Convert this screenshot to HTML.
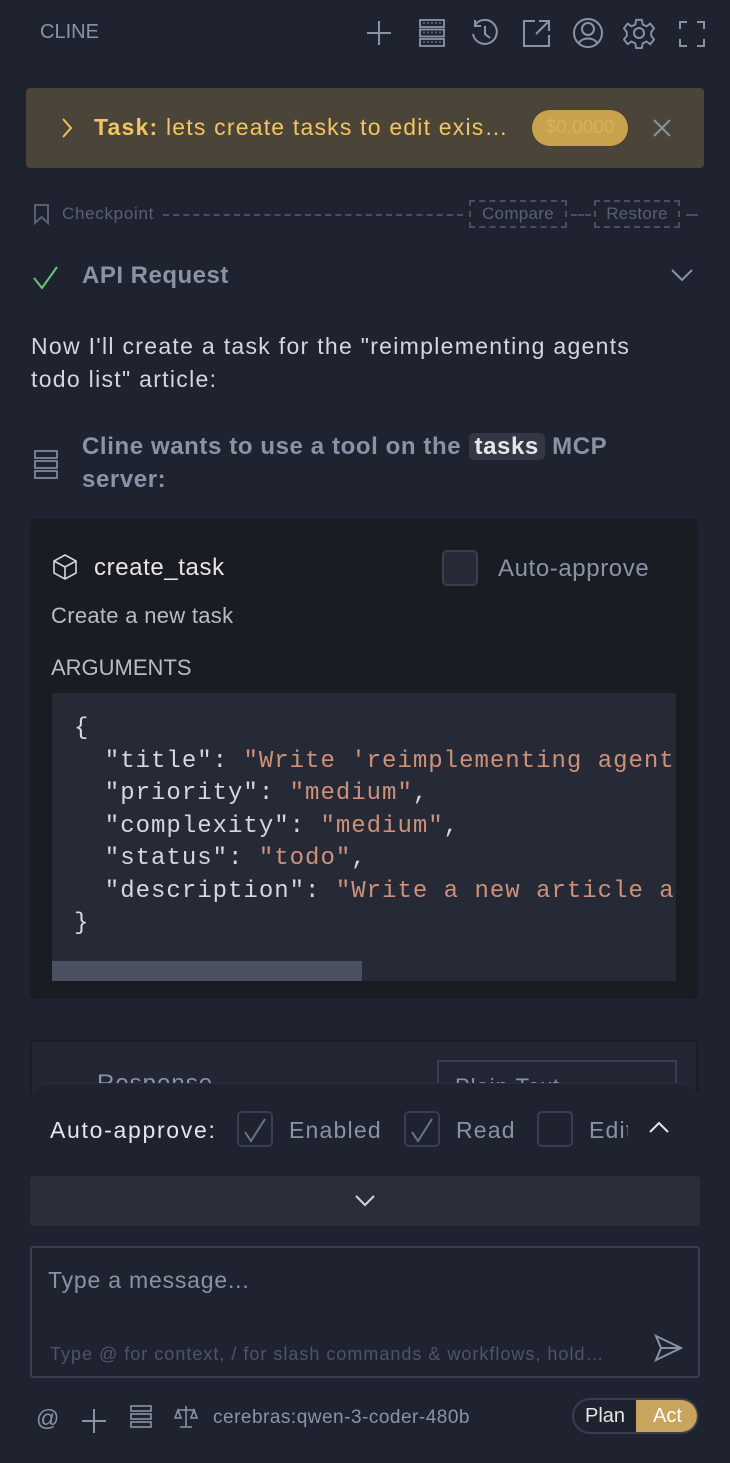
<!DOCTYPE html>
<html><head><meta charset="utf-8"><style>
*{margin:0;padding:0;box-sizing:border-box}
body{width:730px;height:1456px;background:#1f2330;font-family:"Liberation Sans",sans-serif;color:#c8ccd4;position:relative;overflow:hidden;letter-spacing:1px}
.a{position:absolute;white-space:nowrap}
svg{position:absolute;fill:none;stroke:#8a93a6;stroke-width:2}
.mono{font-family:"Liberation Mono",monospace}
</style></head><body>
<div class="a" style="left:40px;top:21px;font-size:20px;color:#8a93a6;letter-spacing:0">CLINE</div>
<svg style="left:364px;top:18px" width="30" height="30"><path d="M15 3v24M3 15h24"/></svg>
<svg style="left:418px;top:18px;stroke-width:1.8" width="28" height="30"><rect x="2" y="2" width="24" height="7"/><rect x="2" y="11.5" width="24" height="7"/><rect x="2" y="21" width="24" height="7"/><path d="M6 4v2M10 4v2M14 4v2M18 4v2M22 4v2M6 13.5v2M10 13.5v2M14 13.5v2M18 13.5v2M22 13.5v2M6 23v2M10 23v2M14 23v2M18 23v2M22 23v2" stroke-width="1"/></svg>
<svg style="left:469px;top:17px" width="32" height="32"><path d="M6 8a12 12 0 1 1-2 9M6 3v6h6M16 9v8l5 4"/></svg>
<svg style="left:521px;top:18px" width="30" height="30"><path d="M14 3H3v25h25V17M18 3h10v10M28 3L15 16"/></svg>
<svg style="left:572px;top:17px" width="32" height="32"><circle cx="16" cy="16" r="14"/><circle cx="16" cy="12" r="6"/><path d="M7 26c3-6 15-6 18 0"/></svg>
<svg style="left:623px;top:17px" width="32" height="32"><circle cx="16" cy="16" r="5"/><path d="M13 2h6l1 5 4 2 4-3 4 5-3 4v4l3 4-4 5-4-3-4 2-1 5h-6l-1-5-4-2-4 3-4-5 3-4v-4l-3-4 4-5 4 3 4-2z" transform="scale(.94) translate(1 1)"/></svg>
<svg style="left:678px;top:20px" width="28" height="28"><path d="M2 9V2h7M19 2h7v7M26 19v7h-7M9 26H2v-7"/></svg>

<div class="a" style="left:26px;top:88px;width:678px;height:80px;background:#4b4539;border-radius:4px"></div>
<svg style="left:60px;top:116px;stroke:#f0c060" width="14" height="24"><path d="M3 3l8 9-8 9"/></svg>
<div class="a" style="left:94px;top:114px;font-size:23px;color:#f3c462;letter-spacing:1.2px"><b>Task:</b> lets create tasks to edit exis…</div>
<div class="a" style="left:532px;top:110px;width:96px;height:36px;background:#c9a24e;border-radius:18px;color:#d8b254;font-size:19px;line-height:36px;text-align:center;letter-spacing:0">$0.0000</div>
<svg style="left:652px;top:118px" width="20" height="20"><path d="M2 2l16 16M18 2L2 18"/></svg>

<svg style="left:33px;top:203px;stroke:#5a6072" width="18" height="22"><path d="M2 2h13v18l-6.5-6L2 20z"/></svg>
<div class="a" style="left:62px;top:204px;font-size:17px;color:#5a6072;letter-spacing:0.7px">Checkpoint</div>
<div class="a" style="left:163px;top:214px;width:300px;border-top:2px dashed #4a4f5e"></div>
<div class="a" style="left:469px;top:200px;width:98px;height:28px;border:2px dashed #4a4f5e;font-size:17px;color:#5a6072;text-align:center;line-height:24px;letter-spacing:0.3px">Compare</div>
<div class="a" style="left:571px;top:214px;width:20px;border-top:2px dashed #4a4f5e"></div>
<div class="a" style="left:594px;top:200px;width:86px;height:28px;border:2px dashed #4a4f5e;font-size:17px;color:#5a6072;text-align:center;line-height:24px;letter-spacing:0.3px">Restore</div>
<div class="a" style="left:686px;top:214px;width:12px;border-top:2px dashed #4a4f5e"></div>

<svg style="left:32px;top:264px;stroke:#6cc47a" width="28" height="26"><path d="M2 14l8 10L25 3"/></svg>
<div class="a" style="left:82px;top:262px;font-size:24px;font-weight:bold;color:#8a93a6;letter-spacing:0.5px">API Request</div>
<svg style="left:670px;top:268px" width="24" height="14"><path d="M2 2l10 10 10-10"/></svg>

<div class="a" style="left:31px;top:330px;font-size:23px;color:#d4d7dd;line-height:33px;letter-spacing:1.3px">Now I'll create a task for the "reimplementing agents<br>todo list" article:</div>

<svg style="left:34px;top:450px;stroke-width:1.6" width="24" height="30"><rect x="1" y="1" width="22" height="7"/><rect x="1" y="11" width="22" height="7"/><rect x="1" y="21" width="22" height="7"/></svg>
<div class="a" style="left:82px;top:430px;font-size:24px;font-weight:bold;color:#8a93a6;line-height:33px;letter-spacing:0.6px">Cline wants to use a tool on the <span style="background:#343846;color:#e6e6e6;border-radius:5px;padding:0 6px">tasks</span> MCP<br>server:</div>

<div class="a" style="left:30px;top:519px;width:668px;height:480px;background:#191c23;border-radius:4px"></div>
<svg style="left:52px;top:553px;stroke:#d4d7dd;stroke-width:1.6" width="26" height="28"><path d="M13 2l11 6v12l-11 6-11-6V8zM2 8l11 6 11-6M13 14v12"/></svg>
<div class="a" style="left:94px;top:554px;font-size:24px;color:#e6e6e6;letter-spacing:0.6px">create_task</div>
<div class="a" style="left:442px;top:550px;width:36px;height:36px;border:2px solid #3a3f4e;border-radius:5px;background:#252a36"></div>
<div class="a" style="left:498px;top:555px;font-size:24px;color:#8a93a6;letter-spacing:0.6px">Auto-approve</div>
<div class="a" style="left:51px;top:603px;font-size:22px;color:#b8bcc4;letter-spacing:0.3px">Create a new task</div>
<div class="a" style="left:51px;top:655px;font-size:22px;color:#b8bcc4;letter-spacing:0">ARGUMENTS</div>
<div class="a" style="left:52px;top:693px;width:624px;height:288px;background:#262a36;overflow:hidden">
<pre class="mono a" style="left:22px;top:20px;font-size:24px;letter-spacing:1px;line-height:32.5px;color:#d4d7dd;white-space:pre">{
  "title": <span style="color:#ce9178">"Write 'reimplementing agents todo list'"</span>,
  "priority": <span style="color:#ce9178">"medium"</span>,
  "complexity": <span style="color:#ce9178">"medium"</span>,
  "status": <span style="color:#ce9178">"todo"</span>,
  "description": <span style="color:#ce9178">"Write a new article about</span>
}</pre>
<div class="a" style="left:0;top:268px;width:310px;height:20px;background:#4a5060"></div>
</div>

<div class="a" style="left:30px;top:1040px;width:668px;height:60px;background:#232733;border:2px solid #191c23;border-radius:4px;overflow:hidden">
<div class="a" style="left:65px;top:28px;font-size:24px;color:#8a93a6">Response</div>
<div class="a" style="left:405px;top:18px;width:240px;height:50px;border:2px solid #3a3f4e;font-size:22px;color:#8a93a6;padding:12px 16px">Plain Text</div>
</div>
<div class="a" style="left:30px;top:1083px;width:670px;height:380px;background:#1f2330;border-radius:20px 20px 0 0;border-top:1px solid #2a2e3a"></div>
<div class="a" style="left:50px;top:1117px;font-size:23px;color:#e6e6e6;letter-spacing:1.7px">Auto-approve:</div>
<div class="a" style="left:237px;top:1111px;width:36px;height:36px;border:2px solid #3a3f4e;border-radius:5px"></div>
<svg style="left:241px;top:1116px;stroke:#6b7387" width="28" height="28"><path d="M4 16l6 9L24 3"/></svg>
<div class="a" style="left:289px;top:1117px;font-size:23px;color:#8a93a6;letter-spacing:1.2px">Enabled</div>
<div class="a" style="left:404px;top:1111px;width:36px;height:36px;border:2px solid #3a3f4e;border-radius:5px"></div>
<svg style="left:408px;top:1116px;stroke:#6b7387" width="28" height="28"><path d="M4 16l6 9L24 3"/></svg>
<div class="a" style="left:456px;top:1117px;font-size:23px;color:#8a93a6;letter-spacing:1.2px">Read</div>
<div class="a" style="left:537px;top:1111px;width:36px;height:36px;border:2px solid #3a3f4e;border-radius:5px"></div>
<div class="a" style="left:589px;top:1117px;font-size:23px;color:#8a93a6;width:39px;overflow:hidden;letter-spacing:1.2px">Edit</div>
<svg style="left:648px;top:1120px;stroke:#e6e6e6" width="22" height="14"><path d="M2 12l9-9 9 9"/></svg>

<div class="a" style="left:30px;top:1176px;width:670px;height:50px;background:#2a2e3a;border-radius:4px"></div>
<svg style="left:354px;top:1194px;stroke:#d4d7dd" width="22" height="14"><path d="M2 2l9 9 9-9"/></svg>

<div class="a" style="left:30px;top:1246px;width:670px;height:132px;border:2px solid #3a3f4e;border-radius:3px"></div>
<div class="a" style="left:48px;top:1267px;font-size:23px;color:#8a93a6;letter-spacing:0.8px">Type a message...</div>
<div class="a" style="left:50px;top:1344px;font-size:18px;color:#4f5566;letter-spacing:1px">Type @ for context, / for slash commands &amp; workflows, hold…</div>
<svg style="left:654px;top:1334px;stroke:#8a93a6" width="30" height="28"><path d="M2 2l25 12L2 26l5-12z M7 14h20"/></svg>

<div class="a" style="left:36px;top:1405px;font-size:23px;color:#8a93a6">@</div>
<svg style="left:81px;top:1408px" width="26" height="26"><path d="M13 1v24M1 13h24"/></svg>
<svg style="left:130px;top:1405px;stroke-width:1.6" width="22" height="24"><rect x="1" y="1" width="20" height="5"/><rect x="1" y="9" width="20" height="5"/><rect x="1" y="17" width="20" height="5"/></svg>
<svg style="left:174px;top:1404px;stroke-width:1.6" width="24" height="26"><path d="M12 2v20M4 6h16M4 6l-3 8h6zM20 6l-3 8h6zM6 23h12"/></svg>
<div class="a" style="left:213px;top:1407px;font-size:19px;color:#8a93a6;letter-spacing:0.5px">cerebras:qwen-3-coder-480b</div>
<div class="a" style="left:572px;top:1398px;width:127px;height:36px;border:2px solid #3a3f4e;border-radius:18px;overflow:hidden">
<div class="a" style="left:0;top:0;width:62px;height:32px;text-align:center;line-height:32px;font-size:20px;color:#e6e6e6;letter-spacing:0">Plan</div>
<div class="a" style="left:62px;top:0;width:63px;height:32px;background:#c9a45c;text-align:center;line-height:32px;font-size:20px;color:#fff;letter-spacing:0">Act</div>
</div>
</body></html>
